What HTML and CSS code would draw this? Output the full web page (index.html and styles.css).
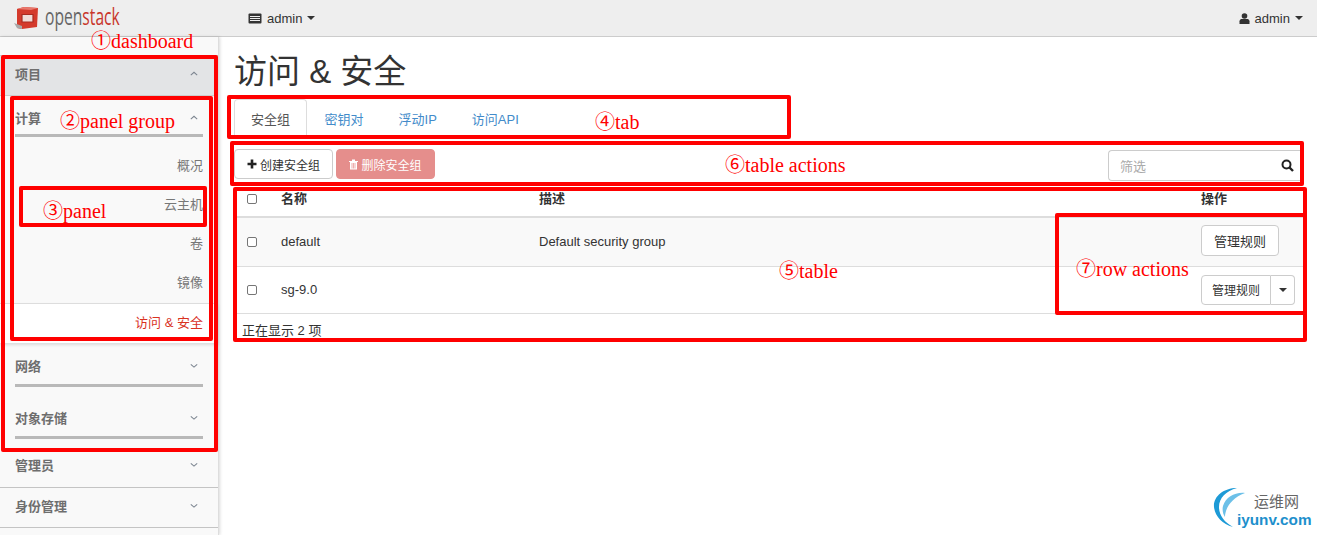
FILE: index.html
```html
<!DOCTYPE html>
<html lang="zh">
<head>
<meta charset="utf-8">
<title>访问 &amp; 安全</title>
<link rel="stylesheet" href="styles.css">
</head>
<body>
<header class="navbar">
  <div class="brand">
    <svg class="logo" width="26" height="24" viewBox="0 0 26 24">
      <path d="M4 3 L11 1 L25 2 L24 21 L9 23 L4 22 Z" fill="#d43a2c"/>
      <path d="M1 17 L4 22 L9 23 L9 20 Z" fill="#a9a9a9"/>
      <path d="M4 3 L11 1 L25 2 L18 4 Z" fill="#e8796e"/>
      <path d="M9 8.500 H20 V16 H9 Z" fill="#f0dcd8" stroke="#a92a20" stroke-width="1.200"/>
    </svg>
    <span class="wordmark">open<em>stack</em></span>
  </div>
  <div class="project">
    <svg width="14" height="11" viewBox="0 0 14 11"><rect x=".5" y=".5" width="13" height="10" rx="1" fill="#333"/><path d="M2 3.500H12M2 5.500H12M2 7.500H12" stroke="#eee" stroke-width="1"/></svg>
    <span>admin</span><i class="caret"></i>
  </div>
  <div class="user">
    <svg width="11" height="11" viewBox="0 0 11 11"><circle cx="5.500" cy="3" r="2.800" fill="#333"/><path d="M.5 11V8.200C.5 6.600 2 6 3 6H8C9 6 10.500 6.600 10.500 8.200V11Z" fill="#333"/></svg>
    <span>admin</span><i class="caret"></i>
  </div>
</header>

<div class="shell">
  <nav class="sidebar">
    <div class="dash open"><span>项目</span><svg class="chev" viewBox="0 0 10 6"><path d="M1 5L5 1.500L9 5"/></svg></div>
    <div class="group">
      <div class="group-head"><span>计算</span><svg class="chev" viewBox="0 0 10 6"><path d="M1 5L5 1.500L9 5"/></svg></div>
      <div class="panels">
        <a class="panel">概况</a>
        <a class="panel">云主机</a>
        <a class="panel">卷</a>
        <a class="panel">镜像</a>
      </div>
      <a class="panel active">访问 &amp; 安全</a>
    </div>
    <div class="group-head closed"><span>网络</span><svg class="chev" viewBox="0 0 10 6"><path d="M1 1.500L5 5L9 1.500"/></svg></div>
    <div class="group-head closed second"><span>对象存储</span><svg class="chev" viewBox="0 0 10 6"><path d="M1 1.500L5 5L9 1.500"/></svg></div>
    <div class="dash admin"><span>管理员</span><svg class="chev" viewBox="0 0 10 6"><path d="M1 1.500L5 5L9 1.500"/></svg></div>
    <div class="dash"><span>身份管理</span><svg class="chev" viewBox="0 0 10 6"><path d="M1 1.500L5 5L9 1.500"/></svg></div>
  </nav>

  <main class="content">
    <h1>访问 &amp; 安全</h1>
    <ul class="tabs">
      <li class="tab current">安全组</li>
      <li class="tab">密钥对</li>
      <li class="tab">浮动IP</li>
      <li class="tab">访问API</li>
    </ul>
    <div class="actions">
      <button class="btn"><svg class="plus" width="10" height="10" viewBox="0 0 10 10"><path d="M5 .5V9.500M.5 5H9.500" stroke="#222" stroke-width="2.600"/></svg>创建安全组</button>
      <button class="btn danger"><svg width="9" height="11" viewBox="0 0 9 11"><path d="M0 2H9V3H8V10.500H1V3H0ZM3 .5H6V2H3Z" fill="#fff"/><path d="M3 4V9.500M4.500 4V9.500M6 4V9.500" stroke="#e58e8c" stroke-width=".7"/></svg>删除安全组</button>
      <div class="filter">
        <span>筛选</span>
        <svg width="13" height="13" viewBox="0 0 13 13"><circle cx="5.500" cy="5.500" r="4" fill="none" stroke="#222" stroke-width="2"/><path d="M8.500 8.500L12 12" stroke="#222" stroke-width="2.400"/></svg>
      </div>
    </div>
    <table class="table">
      <thead>
        <tr><th class="c"><i class="check"></i></th><th class="n">名称</th><th class="d">描述</th><th class="a">操作</th></tr>
      </thead>
      <tbody>
        <tr class="odd"><td class="c"><i class="check"></i></td><td class="n">default</td><td class="d">Default security group</td><td class="a"><button class="btn rule">管理规则</button></td></tr>
        <tr class="even"><td class="c"><i class="check"></i></td><td class="n">sg-9.0</td><td class="d"></td><td class="a"><div class="split"><button class="btn part">管理规则</button><button class="btn toggle"><i class="caret"></i></button></div></td></tr>
      </tbody>
      <tfoot>
        <tr><td colspan="4">正在显示 2 项</td></tr>
      </tfoot>
    </table>
  </main>
</div>

<div class="box b1"></div><div class="box b2"></div><div class="box b3"></div><div class="box b4"></div>
<div class="box b5"></div><div class="box b6"></div><div class="box b7"></div>
<span class="note n1">①dashboard</span>
<span class="note n2">②panel group</span>
<span class="note n3">③panel</span>
<span class="note n4">④tab</span>
<span class="note n5">⑤table</span>
<span class="note n6">⑥table actions</span>
<span class="note n7">⑦row actions</span>

<div class="mark">
  <svg width="40" height="40" viewBox="0 0 40 40" fill="none">
    <path d="M24 1C10 1 0 10 1 20C2 29 9 37 20 40C11 35 6 28 6 20C6 11 13 4 24 1Z" fill="#1d9ad6"/>
    <path d="M32 6C22 5 13 10 10 19C9 23 10 27 12 30C12 22 18 11 32 6Z" fill="#6cc0e8"/>
  </svg>
  <div class="mark-text"><span class="cn">运维网</span><span class="en">iyunv.com</span></div>
</div>
</body>
</html>
```

FILE: styles.css
```css
* { box-sizing: border-box; }
html, body { margin: 0; padding: 0; }
body {
  width: 1317px;
  height: 535px;
  overflow: hidden;
  position: relative;
  background: #fff;
  color: #333;
  font-family: "Liberation Sans", "Noto Sans CJK SC", sans-serif;
  font-size: 13px;
}
.navbar {
  height: 37px;
  background: #eee;
  border-bottom: 1px solid #ccc;
  display: flex;
  align-items: center;
  padding: 0 14px 0 13px;
}
.brand { display: flex; align-items: center; width: 235px; gap: 6px; margin-top: -1px; }
.wordmark {
  font-family: "Open Sans", sans-serif;
  font-size: 23px;
  line-height: 30px;
  color: #666;
  transform: scaleX(.68);
  transform-origin: left center;
  display: inline-block;
  width: 74px;
  margin-top: -3px;
  white-space: nowrap;
}
.wordmark em { font-style: normal; color: #c8352b; }
.project, .user { display: flex; align-items: center; gap: 5px; color: #333; }
.project { flex: 1; }
.caret {
  display: inline-block;
  width: 0;
  height: 0;
  border-left: 4px solid transparent;
  border-right: 4px solid transparent;
  border-top: 4px solid #333;
}
.shell { display: flex; height: 498px; }
.sidebar {
  width: 219px;
  flex: none;
  padding-top: 18px;
  background: #f9f9f9;
  border-right: 1px solid #ddd;
  box-shadow: 1px 0 3px rgba(0,0,0,.15);
  color: #6e6e6e;
}
.dash {
  height: 40px;
  padding: 0 15px 4px;
  display: flex;
  align-items: center;
  justify-content: space-between;
  font-weight: 700;
  border-bottom: 1px solid #c4c4c4;
  color: #6e6e6e;
}
.dash.open { background: #e3e4e6; height: 41px; border-top: 1px solid #ccc; border-bottom: 1px solid #ccc; }
.dash.admin { margin-top: 4px; height: 45px; padding-top: 3px; }
.chev { width: 8px; height: 5px; margin-right: 5px; fill: none; stroke: #7c8590; stroke-width: 1.300; }
.group { display: flex; flex-direction: column; }
.group-head {
  margin: 0 15px;
  height: 41px;
  padding-top: 5px;
  display: flex;
  align-items: center;
  justify-content: space-between;
  font-weight: 700;
  border-bottom: 3px solid #b9b9b9;
}
.group-head.closed { height: 44px; padding-top: 4px; }
.group-head.second { margin-top: 8px; }
.panels { display: flex; flex-direction: column; padding: 8px 0 2px; }
.panel {
  height: 39px;
  padding: 0 15px;
  display: flex;
  align-items: center;
  justify-content: flex-end;
  color: #777;
}
.panel.active {
  height: 40px;
  background: #fff;
  color: #d9321f;
  border-top: 1px solid #ddd;
  box-shadow: 0 2px 3px rgba(0,0,0,.12);
  padding-bottom: 4px;
}
.content { flex: 1; padding: 0 12px 0 14px; min-width: 0; }
h1 {
  margin: 15px 0 0;
  font-size: 33px;
  line-height: 40px;
  font-weight: 400;
  color: #333;
  padding-left: 1px;
}
.tabs {
  list-style: none;
  margin: 7px 0 0 1px;
  padding: 0;
  height: 38px;
  display: flex;
}
.tab { padding: 0 17.500px; display: flex; align-items: center; color: #428bca; height: 38px; }
.tab.current {
  color: #555;
  border: 1px solid #ddd;
  border-bottom-color: #fff;
  border-radius: 4px 4px 0 0;
  padding: 0 16px 0 16px;
}
.actions { display: flex; align-items: flex-start; gap: 3px; height: 30px; margin: 12px 5px 0 1px; }
.btn {
  font: inherit;
  font-size: 12px;
  height: 30px;
  padding: 0 12px;
  background: #fff;
  border: 1px solid #ccc;
  border-radius: 4px;
  color: #333;
  display: inline-flex;
  align-items: center;
  gap: 3px;
}
.actions > .btn { width: 99px; justify-content: center; padding: 0; }
.btn.danger { background: #e58e8c; border-color: #e58e8c; color: #fff; }
.filter {
  margin-left: auto;
  margin-top: 1px;
  width: 192px;
  height: 31px;
  border: 1px solid #ccc;
  border-right: 0;
  border-radius: 4px 0 0 4px;
  display: flex;
  align-items: center;
  justify-content: space-between;
  padding: 0 6px 0 11px;
  color: #aaa;
}
.table {
  width: 1071px;
  margin: 7px 0 0 3px;
  border-collapse: collapse;
  table-layout: fixed;
}
th, td { padding: 0; text-align: left; vertical-align: middle; }
thead tr { height: 31px; }
thead th { border-bottom: 2px solid #ddd; font-weight: 700; color: #333; padding-top: 5px; vertical-align: top; line-height: 16px; }
thead th.c { padding-top: 8px; }
tbody tr { border-bottom: 1px solid #ddd; }
.odd { height: 49px; background: #f9f9f9; }
.even { height: 47px; }
.c { width: 45px; padding-left: 11px; }
.n { width: 258px; }
.d { width: 662px; }
.a { width: 106px; }
.check {
  display: block;
  width: 10px;
  height: 10px;
  background: #fff;
  border: 1px solid #767676;
  border-radius: 2px;
}
tfoot td { padding: 9px 0 0 6px; line-height: 16px; vertical-align: top; }
.rule { width: 78px; height: 31px; justify-content: center; padding: 0; font-size: 13px; margin-bottom: 2px; }
.split { display: flex; }
.part { width: 70px; height: 30px; justify-content: center; padding: 0; border-radius: 4px 0 0 4px; }
.toggle { width: 24px; height: 30px; justify-content: center; padding: 0; border-left: 0; border-radius: 0 4px 4px 0; }

.box { position: absolute; border: 4px solid #f00; border-radius: 2px; pointer-events: none; }
.b1 { left: 1px; top: 55px; width: 217px; height: 397px; }
.b2 { left: 10px; top: 96px; width: 203px; height: 245px; }
.b3 { left: 19px; top: 186px; width: 188px; height: 41px; }
.b4 { left: 227px; top: 95px; width: 564px; height: 44px; }
.b5 { left: 233px; top: 187px; width: 1074px; height: 155px; }
.b6 { left: 230px; top: 141px; width: 1074px; height: 45px; }
.b7 { left: 1055px; top: 213px; width: 252px; height: 102px; }
.note {
  position: absolute;
  color: #f00;
  font-family: "Liberation Serif", "Noto Sans CJK SC", serif;
  font-size: 20px;
  line-height: 24px;
  white-space: nowrap;
}
.n1 { left: 91px; top: 29px; }
.n2 { left: 60px; top: 109px; }
.n3 { left: 43px; top: 199px; }
.n4 { left: 595px; top: 110px; }
.n5 { left: 779px; top: 259px; }
.n6 { left: 725px; top: 153px; }
.n7 { left: 1076px; top: 257px; }

.mark { position: absolute; left: 1213px; top: 487px; display: flex; }
.mark-text { display: flex; flex-direction: column; margin-left: -16px; padding-top: 3px; }
.cn { font-size: 15px; line-height: 21px; color: #666; padding-left: 17px; font-family: "Noto Sans CJK SC", sans-serif; }
.en { font-size: 15.300px; line-height: 18px; font-weight: 700; color: #1d8fcc; font-family: "Liberation Sans", sans-serif; white-space: nowrap; }
```
